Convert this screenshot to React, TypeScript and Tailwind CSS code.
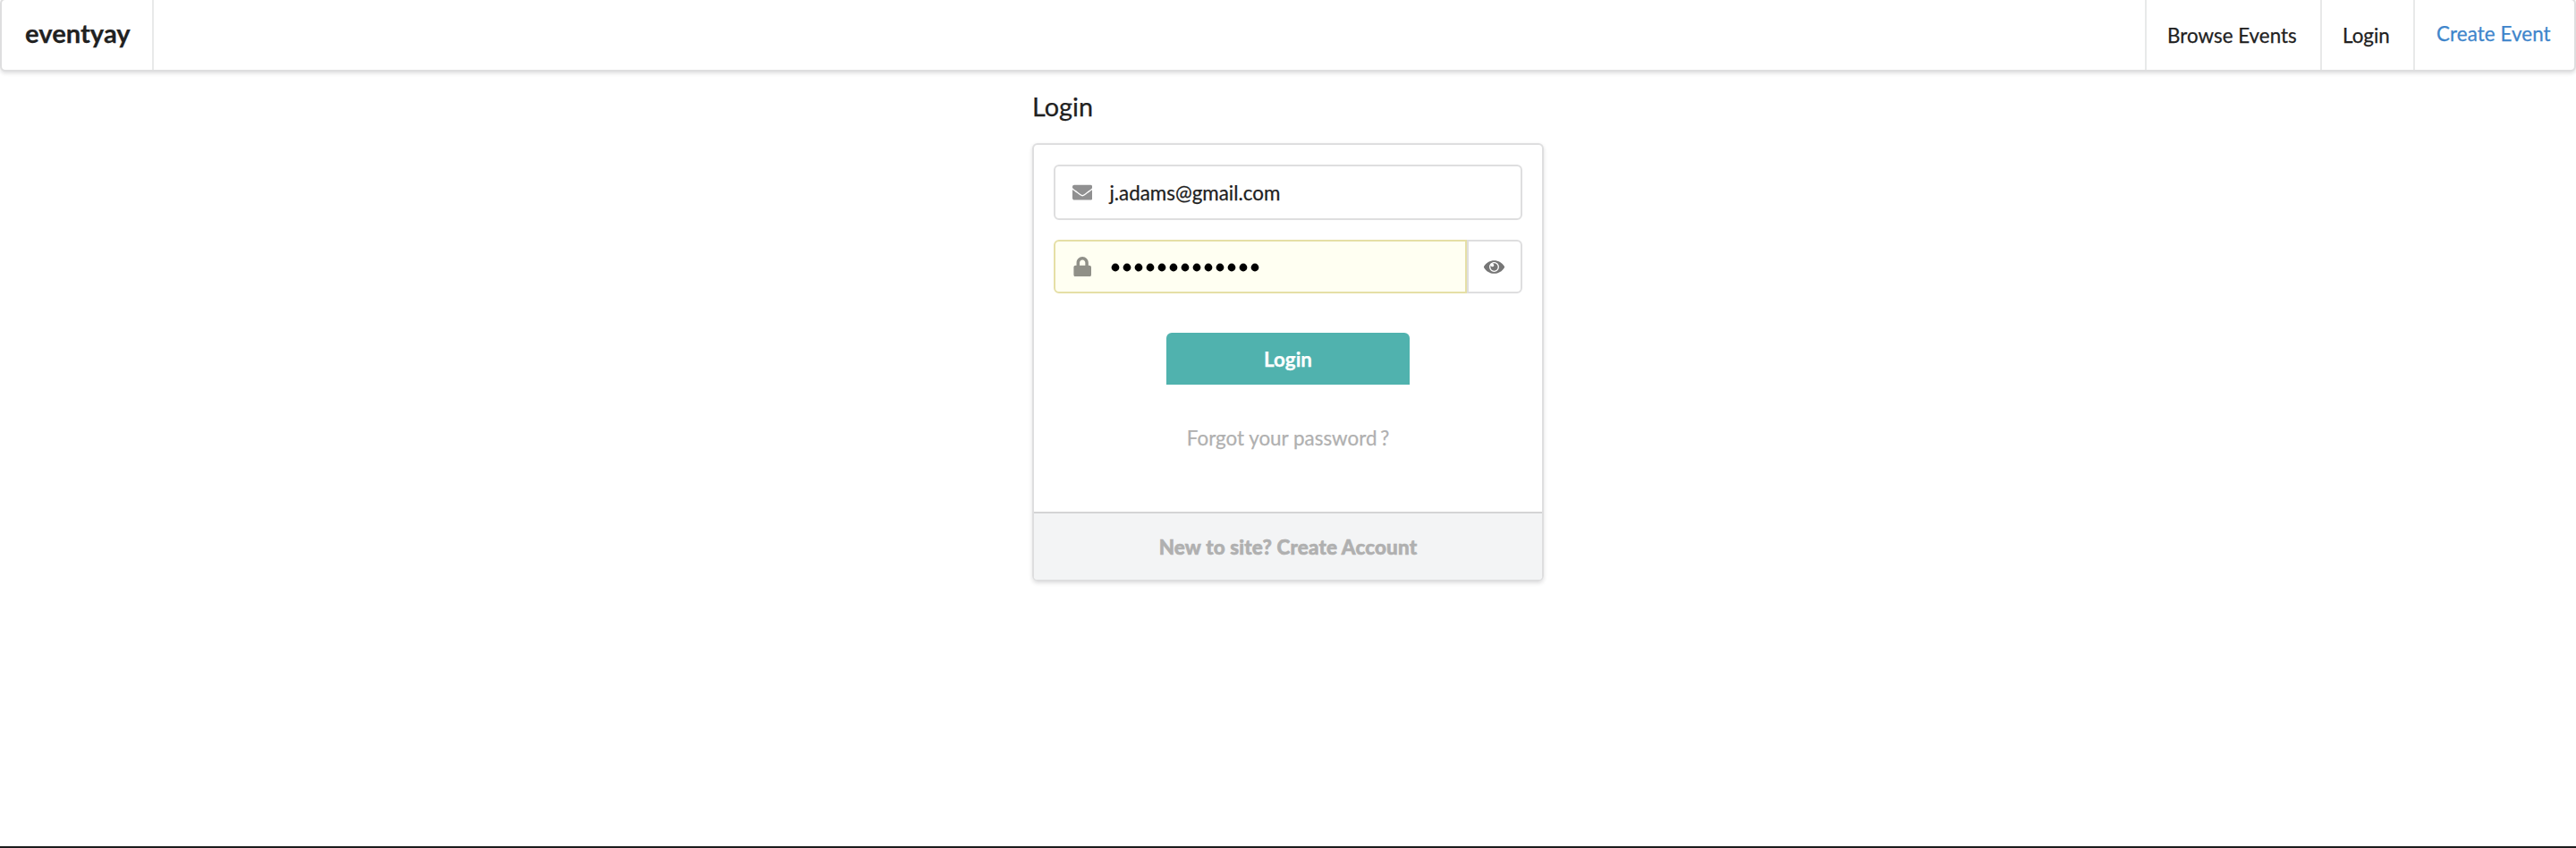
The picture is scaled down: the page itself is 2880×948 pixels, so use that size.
import { FaEnvelope, FaLock } from "react-icons/fa";

function NavBar() {
  return (
    <nav className="-mt-0.5 flex h-[82px] shrink-0 rounded-md border-2 border-[#dededf] bg-white shadow-[0_2px_4px_0_rgba(34,36,38,0.15)]">
      <a className="flex w-[170px] items-center border-r-2 border-[#e8e9e9] pb-1 pl-[26px] text-[29.2px] font-bold leading-none">
        eventyay
      </a>
      <div className="ml-auto flex">
        <a className="flex w-[196px] items-center border-l-2 border-[#e8e9e9] pl-[23px] pt-0.5">Browse Events</a>
        <a className="flex w-[104px] items-center border-l-2 border-[#e8e9e9] pl-[23px] pt-0.5">Login</a>
        <a className="flex w-[180px] items-center border-l-2 border-[#e8e9e9] pb-0.5 pl-6 tracking-[0.08px] text-[#3e85cb]">
          Create Event
        </a>
      </div>
    </nav>
  );
}

function PasswordDots() {
  return (
    <svg viewBox="0 0 170 12" className="ml-[20.6px] h-3 w-[170px] fill-black" aria-label="password">
      {Array.from({ length: 13 }, (_, i) => (
        <circle key={i} cx={5 + i * 13} cy={7} r={4.4} />
      ))}
    </svg>
  );
}

function EyeIcon() {
  return (
    <svg viewBox="0 0 576 512" className="mr-px h-[21px] w-[23px] fill-[#767676]">
      <path d="M569.354 231.631C512.969 135.949 407.81 72 288 72 168.14 72 63.004 135.994 6.646 231.631a47.999 47.999 0 0 0 0 48.739C63.031 376.051 168.19 440 288 440c119.86 0 224.996-63.994 281.354-159.631a47.997 47.997 0 0 0 0-48.738zM288 392c-75.162 0-136-60.827-136-136 0-75.162 60.826-136 136-136 75.162 0 136 60.826 136 136 0 75.162-60.826 136-136 136zm104-136c0 57.438-46.562 104-104 104s-104-46.562-104-104c0-17.708 4.431-34.379 12.236-48.973l-.001.032c0 23.651 19.173 42.823 42.824 42.823s42.824-19.173 42.824-42.823c0-23.651-19.173-42.824-42.824-42.824l-.032.001C253.621 156.431 270.292 152 288 152c57.438 0 104 46.562 104 104z" />
    </svg>
  );
}

export default function App() {
  return (
    <div className="flex h-[948px] flex-col overflow-hidden border-b-2 border-[#1b1c1d] bg-white font-['Lato',sans-serif] text-[22.4px] leading-8 text-[#212121] [-webkit-text-stroke:0.25px_currentColor]">
      <NavBar />
      <main className="mx-auto w-[572px]">
        <h1 className="mt-[21px] h-[59px] text-[28.8px] leading-[36px]">Login</h1>
        <section className="flex h-[490px] flex-col rounded-md border-2 border-[#dededf] shadow-[0_2px_4px_0_rgba(34,36,38,0.15)]">
          <form className="flex flex-1 flex-col items-center px-[22px] pt-[22px]">
            <div className="flex h-[62px] w-full items-center rounded-md border-2 border-[#dededf] pl-[19px]">
              <FaEnvelope className="size-[22.4px] shrink-0 text-[#909091]" />
              <span className="ml-[19px] pt-0.5">j.adams@gmail.com</span>
            </div>
            <div className="mt-[22px] flex h-[60px] w-full">
              <div className="flex flex-1 items-center rounded-l-md border-2 border-[#e5dfa6] bg-[#fffff2] pl-[19px]">
                <FaLock className="size-[22.4px] shrink-0 text-[#909088]" />
                <PasswordDots />
              </div>
              <div className="flex w-[62px] items-center justify-center rounded-r-md border-2 border-[#dededf]">
                <EyeIcon />
              </div>
            </div>
            <button
              type="button"
              className="mt-11 flex h-[58px] w-[272px] items-center justify-center rounded-t-md bg-[#50b2ae] pt-0.5 font-bold text-white"
            >
              Login
            </button>
            <a className="mt-11 text-[#b0b0b0]">
              Forgot your password <span className="-ml-0.5">?</span>
            </a>
          </form>
          <div className="flex h-[76px] items-center justify-center rounded-b border-t-2 border-[#d4d4d5] bg-[#f3f4f5] pt-0.5 font-black tracking-[0.17px] text-[#b0b0b0] [-webkit-text-stroke:0.6px_#b0b0b0]">
            New to site? Create Account
          </div>
        </section>
      </main>
    </div>
  );
}
